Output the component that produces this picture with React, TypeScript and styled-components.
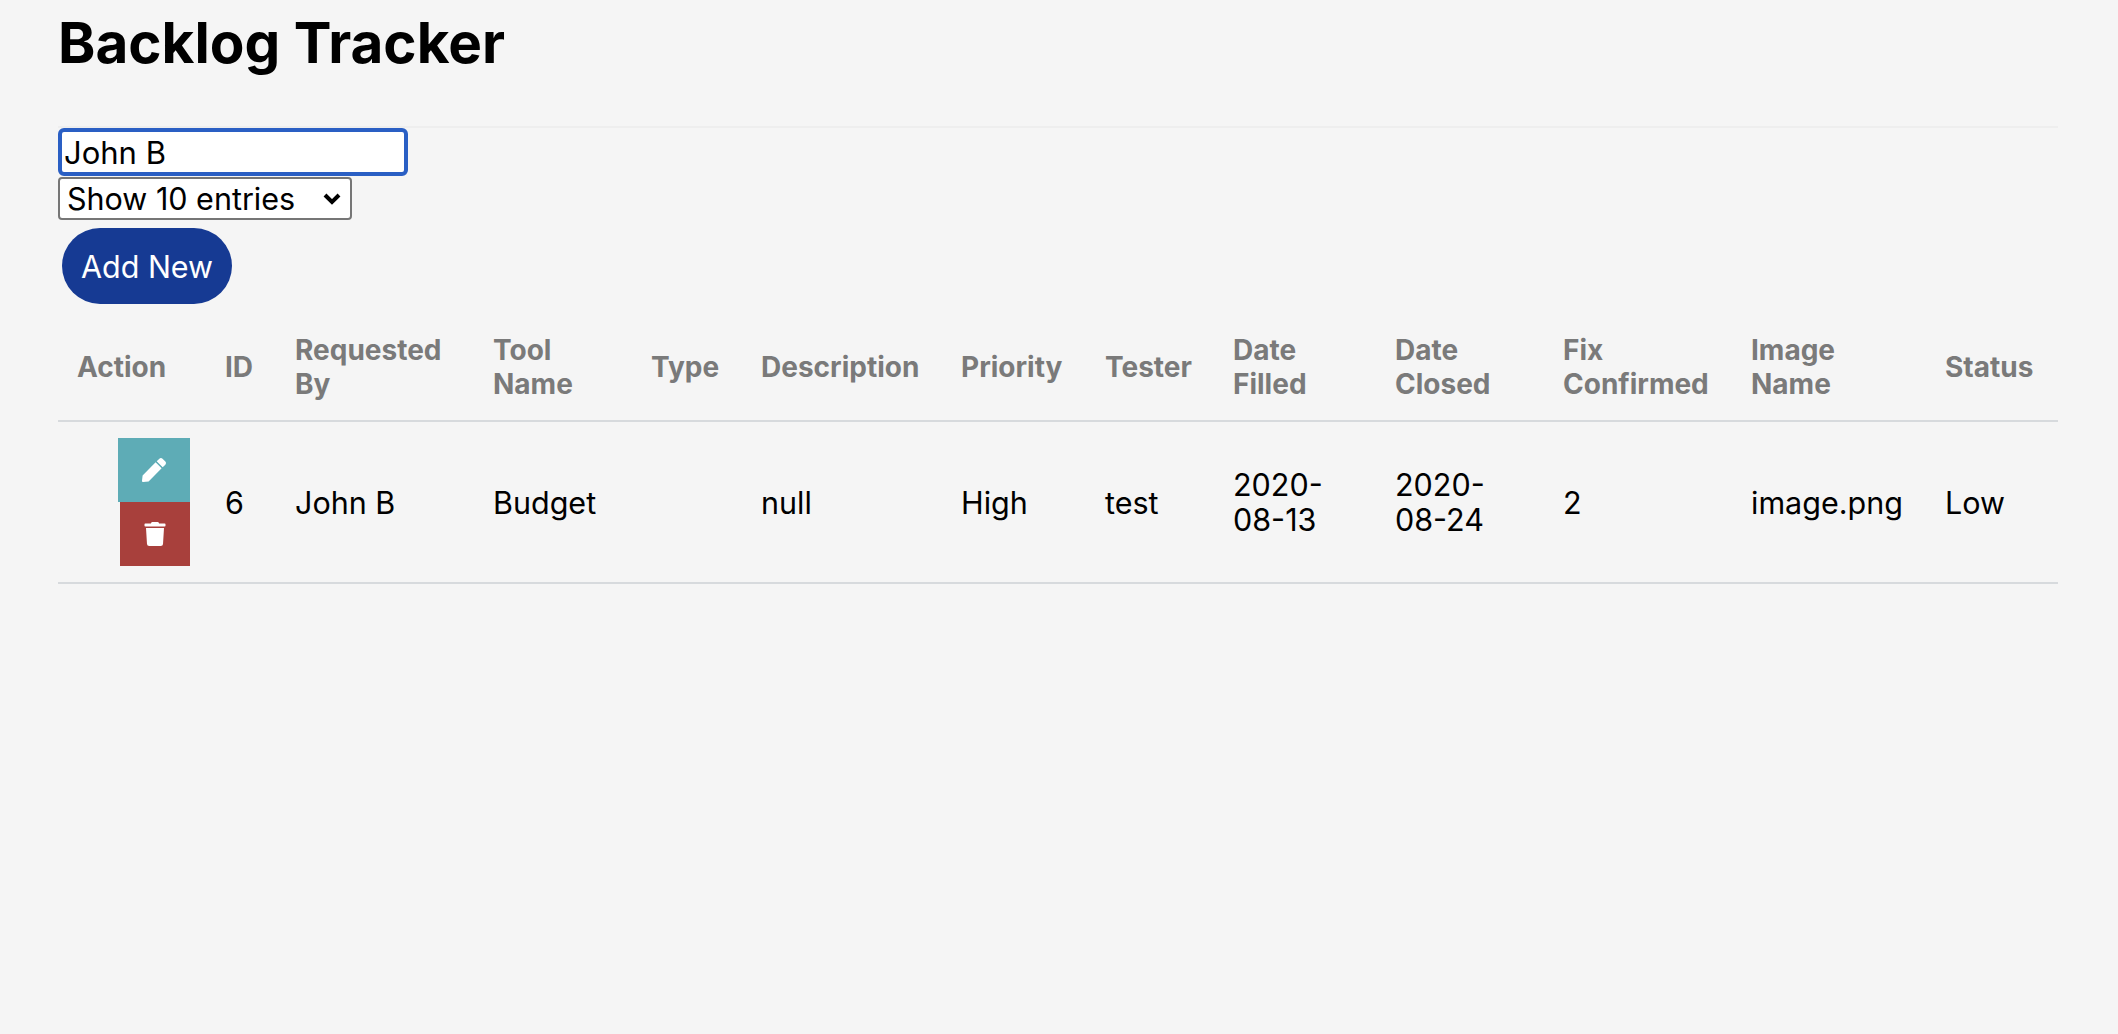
import styled, { createGlobalStyle } from "styled-components";
import { FaPen, FaTrash } from "react-icons/fa";

const GlobalStyle = createGlobalStyle`
  html, body {
    margin: 0;
    background: #f5f5f5;
    font-family: Inter, "Liberation Sans", sans-serif;
    color: #000;
  }
`;
const Page = styled.div`
  width: 2000px;
  height: 1034px;
  margin: 0 0 0 58px;
  overflow: hidden;
`;
const Title = styled.h1`
  font-size: 56.6px;
  line-height: 68px;
  font-weight: 700;
  margin: 9px 0 49px;
`;
const Rule = styled.hr`
  height: 2px;
  margin: 0;
  border: 0;
  background: #eeeeee;
`;
const Controls = styled.div`
  display: flex;
  flex-direction: column;
  align-items: flex-start;
`;
const SearchInput = styled.input`
  box-sizing: border-box;
  width: 350px;
  height: 48px;
  padding: 0 2px;
  border: 4px solid #2a5fc4;
  border-radius: 6px;
  outline: none;
  background: #fff;
  font: 400 31px Inter, "Liberation Sans", sans-serif;
  color: #000;
`;
const EntriesSelect = styled.select`
  appearance: none;
  box-sizing: border-box;
  width: 294px;
  height: 43px;
  margin-top: 1px;
  padding: 0 0 0 7px;
  border: 2px solid #767676;
  border-radius: 4px;
  background: #fff url("data:image/svg+xml,%3Csvg xmlns='http://www.w3.org/2000/svg' width='20' height='14'%3E%3Cpath d='M3 3l7 7 7-7' fill='none' stroke='%23000' stroke-width='4'/%3E%3C/svg%3E") no-repeat right 8px center;
  font: 400 30.5px Inter, "Liberation Sans", sans-serif;
  color: #000;
`;
const AddButton = styled.button`
  box-sizing: border-box;
  width: 170px;
  height: 76px;
  margin: 8px 0 0 4px;
  padding: 0;
  border: 0;
  border-radius: 38px;
  background: #163a93;
  font: 400 30.5px Inter, "Liberation Sans", sans-serif;
  color: #fff;
`;
const Table = styled.table`
  width: 2000px;
  margin-top: 16px;
  table-layout: fixed;
  border-collapse: collapse;
`;
const HeadCell = styled.th`
  height: 101px;
  padding: 0 20px 6px;
  box-sizing: border-box;
  border-bottom: 2px solid #d7dadd;
  text-align: left;
  font-size: 28px;
  line-height: 34px;
  font-weight: 700;
  color: #7a7a7a;

  &:first-child {
    padding-left: 19px;
  }
`;
const Cell = styled.td`
  height: 160px;
  padding: 0 20px;
  border-bottom: 2px solid #d7dadd;
  font-size: 30.5px;
  line-height: 35px;
  color: #000;
`;
const ActionCell = styled(Cell)`
  padding: 0 15px 0 0;
`;
const ActionStack = styled.div`
  display: flex;
  flex-direction: column;
  align-items: flex-end;
`;
const ActionButton = styled.button<{ $tone: string; $width: number }>`
  display: flex;
  align-items: center;
  justify-content: center;
  box-sizing: border-box;
  width: ${(p) => p.$width}px;
  height: 64px;
  padding: 0;
  border: 0;
  background: ${(p) => p.$tone};
  font-size: 24px;
  color: #fff;
`;

const columns: [string, number][] = [
  ["Action", 147],
  ["ID", 70],
  ["Requested By", 198],
  ["Tool Name", 158],
  ["Type", 110],
  ["Description", 200],
  ["Priority", 144],
  ["Tester", 128],
  ["Date Filled", 162],
  ["Date Closed", 168],
  ["Fix Confirmed", 188],
  ["Image Name", 194],
  ["Status", 133],
];
const row = ["6", "John B", "Budget", "", "null", "High", "test", "2020-08-13", "2020-08-24", "2", "image.png", "Low"];

export default function App() {
  return (
    <Page>
      <GlobalStyle />
      <Title>Backlog Tracker</Title>
      <Rule />
      <Controls>
        <SearchInput defaultValue="John B" />
        <EntriesSelect defaultValue="10">
          <option value="10">Show 10 entries</option>
          <option value="25">Show 25 entries</option>
          <option value="50">Show 50 entries</option>
        </EntriesSelect>
        <AddButton>Add New</AddButton>
      </Controls>
      <Table>
        <colgroup>
          {columns.map(([name, width]) => (
            <col key={name} width={width} />
          ))}
        </colgroup>
        <thead>
          <tr>
            {columns.map(([name]) => (
              <HeadCell key={name}>{name}</HeadCell>
            ))}
          </tr>
        </thead>
        <tbody>
          <tr>
            <ActionCell>
              <ActionStack>
                <ActionButton $tone="#5eacb6" $width={72}>
                  <FaPen />
                </ActionButton>
                <ActionButton $tone="#a8403c" $width={70}>
                  <FaTrash />
                </ActionButton>
              </ActionStack>
            </ActionCell>
            {row.map((value, i) => (
              <Cell key={i}>{value}</Cell>
            ))}
          </tr>
        </tbody>
      </Table>
    </Page>
  );
}
